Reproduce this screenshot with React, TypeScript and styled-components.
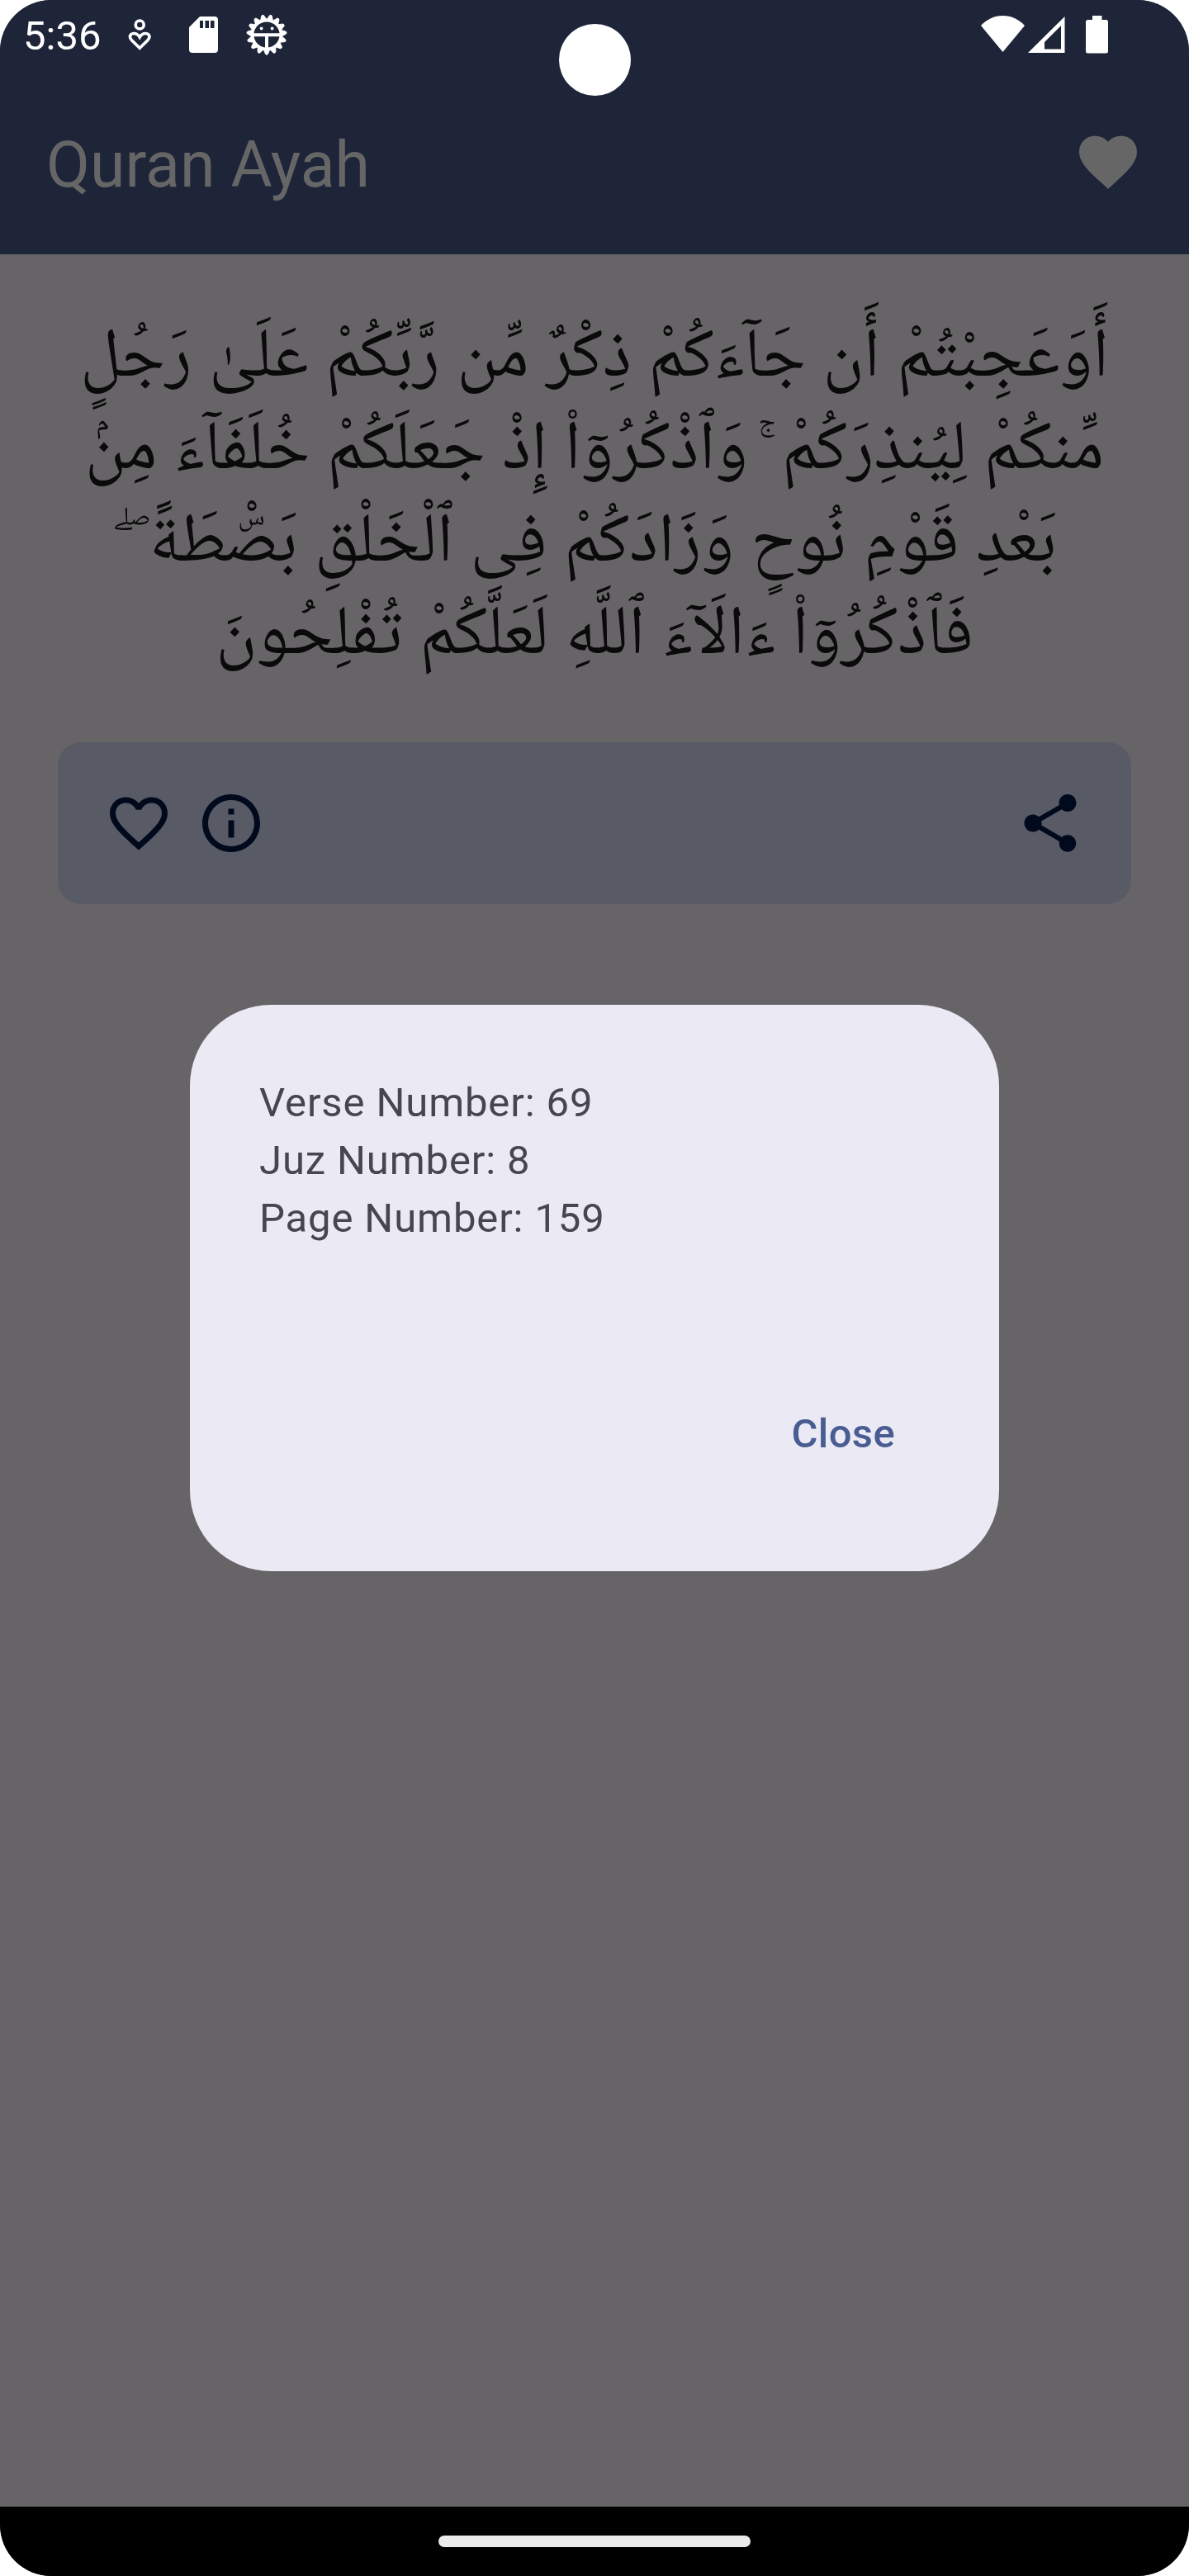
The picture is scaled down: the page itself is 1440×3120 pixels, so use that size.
import React from "react";
import styled, { createGlobalStyle } from "styled-components";

const GlobalStyle = createGlobalStyle`
  html, body { margin: 0; padding: 0; background: #ffffff; }
  *, *::before, *::after { box-sizing: border-box; }
`;

const Phone = styled.div`
  position: relative;
  width: 1440px;
  height: 3120px;
  display: flex;
  flex-direction: column;
  border-radius: 62px;
  overflow: hidden;
  background: #676467;
  font-family: Roboto, "Liberation Sans", sans-serif;
`;

const StatusBar = styled.div`
  height: 84px;
  flex: none;
  display: flex;
  justify-content: space-between;
  padding: 0 98px 0 28px;
  background: #1e2539;
  color: #ffffff;
`;

const StatusGroup = styled.div`
  display: flex;
  align-items: flex-start;
`;

const Clock = styled.span`
  width: 96px;
  padding-top: 15px;
  font-size: 49px;
  line-height: 57px;
  white-space: nowrap;
`;

const StatusIcon = styled.svg<{ $w: number; $h: number; $left: number; $top: number }>`
  flex: none;
  display: block;
  width: ${(p) => p.$w}px;
  height: ${(p) => p.$h}px;
  margin: ${(p) => p.$top}px 0 0 ${(p) => p.$left}px;
`;

const Camera = styled.div`
  position: absolute;
  left: 677px;
  top: 29px;
  width: 87px;
  height: 87px;
  border-radius: 50%;
  background: #ffffff;
`;

const AppBar = styled.header`
  height: 224px;
  flex: none;
  display: flex;
  align-items: center;
  justify-content: space-between;
  padding: 0 56px;
  background: #1e2539;
  color: #666666;
`;

const Title = styled.h1`
  margin: 0 0 -8px;
  font-size: 77px;
  line-height: 98px;
  font-weight: 400;
`;

const Icon = styled.svg`
  display: block;
  width: 84px;
  height: 84px;
  fill: currentColor;
`;

const Content = styled.main`
  flex: 1;
  padding: 73px 70px 0;
`;

const Verse = styled.p`
  height: 448px;
  margin: 0;
  direction: rtl;
  color: #0a0a0a;
  font-family: "Noto Naskh Arabic", "DejaVu Sans", "Noto Sans", sans-serif;
  font-size: 84px;
  line-height: 112px;
  text-align: center;
  word-spacing: 2px;
  white-space: nowrap;
`;

const VerseLine = styled.span`
  display: block;
  height: 112px;
`;

const PauseMark = styled.span<{ $shift: number }>`
  margin-right: ${(p) => p.$shift}px;
  margin-left: ${(p) => -p.$shift}px;
`;

const ActionBar = styled.div`
  display: flex;
  align-items: center;
  height: 196px;
  margin-top: 70px;
  padding: 0 56px;
  gap: 28px;
  border-radius: 28px;
  background: #585a66;
  color: #000a1c;
`;

const Spacer = styled.div`
  flex: 1;
`;

const NavBar = styled.div`
  height: 84px;
  flex: none;
  display: flex;
  align-items: center;
  justify-content: center;
  background: #000000;
`;

const Handle = styled.div`
  width: 378px;
  height: 14px;
  border-radius: 7px;
  background: #ebebeb;
`;

const Overlay = styled.div`
  position: absolute;
  inset: 0;
  display: flex;
  align-items: center;
  justify-content: center;
`;

const Dialog = styled.section`
  display: flex;
  flex-direction: column;
  width: 980px;
  height: 686px;
  padding: 84px;
  border-radius: 98px;
  background: #ebe9f3;
  color: #45464f;
`;

const DialogLine = styled.p`
  margin: 0;
  font-size: 49px;
  line-height: 70px;
  letter-spacing: 0.875px;
`;

const DialogActions = styled.div`
  display: flex;
  justify-content: flex-end;
  margin-top: 156px;
`;

const CloseButton = styled.button`
  height: 140px;
  padding: 0 42px;
  border: 0;
  background: none;
  color: #495d92;
  font: 500 49px/70px Roboto, "Liberation Sans", sans-serif;
  letter-spacing: 0.35px;
`;

const verse = [
  { text: "أَوَعَجِبْتُمْ أَن جَآءَكُمْ ذِكْرٌ مِّن رَّبِّكُمْ عَلَىٰ رَجُلٍ" },
  { text: "مِّنكُمْ لِيُنذِرَكُمْ", mark: " ۚ", shift: 6, rest: " وَٱذْكُرُوٓا۟ إِذْ جَعَلَكُمْ خُلَفَآءَ مِنۢ" },
  { text: "بَعْدِ قَوْمِ نُوحٍ وَزَادَكُمْ فِى ٱلْخَلْقِ بَصْۜطَةً", mark: " ۖ", shift: 10 },
  { text: "فَٱذْكُرُوٓا۟ ءَالَآءَ ٱللَّهِ لَعَلَّكُمْ تُفْلِحُونَ" },
];

const details = ["Verse Number: 69", "Juz Number: 8", "Page Number: 159"];

const teeth = Array.from({ length: 15 }, (_, i) => i * 24 + 12);

export default function App() {
  return (
    <>
      <GlobalStyle />
      <Phone>
        <StatusBar>
          <StatusGroup>
            <Clock>5:36</Clock>
            <StatusIcon $w={28} $h={40} $left={31} $top={23} viewBox="0 0 28 40" fill="none" stroke="#fff" strokeWidth="3.6">
              <circle cx="14.2" cy="7" r="5" />
              <path d="M14.2 35.3 4.3 25.4C.8 21.6 2.6 17.5 7.5 17.5c3 0 5.2 2 6.7 4.6 1.5-2.6 3.7-4.6 6.7-4.6 4.900 0 6.700 4.100 3.200 7.900z" />
            </StatusIcon>
            <StatusIcon $w={35} $h={44} $left={46} $top={20} viewBox="0 0 35 44">
              <path fill="#fff" fillRule="evenodd" d="M13 0H31a4 4 0 0 1 4 4v36a4 4 0 0 1-4 4H4a4 4 0 0 1-4-4V13zM13 5v9h4V5zM19.5 5v9h4.500V5zM26 5v9h4.500V5z" />
            </StatusIcon>
            <StatusIcon $w={50} $h={50} $left={34} $top={17} viewBox="0 0 50 50">
              {teeth.map((a) => (
                <path key={a} transform={`rotate(${a} 25 25)`} d="M21 7.500 23.300 2a1.800 1.800 0 0 1 3.400 0L29 7.500z" fill="#fff" stroke="#fff" strokeWidth="0.8" />
              ))}
              <circle cx="25" cy="25" r="17.4" fill="none" stroke="#fff" strokeWidth="3.6" />
              <path d="M9 25.200H41M25 25V42" stroke="#fff" strokeWidth="4" fill="none" />
              <circle cx="18.6" cy="17.5" r="1.9" fill="#fff" />
              <circle cx="31.6" cy="17.5" r="1.9" fill="#fff" />
            </StatusIcon>
          </StatusGroup>
          <StatusGroup>
            <StatusIcon $w={53} $h={44} $left={0} $top={19} viewBox="0 0 53 44" fill="#fff">
              <path d="M26.5 44 0 12C7 4.500 16 0 26.500 0S46 4.500 53 12z" />
            </StatusIcon>
            <StatusIcon $w={45} $h={44} $left={4} $top={19.5} viewBox="0 0 45 44">
              <path fill="#fff" fillRule="evenodd" d="M0 44 44.500 0V44zM20 31v8.500H40V11z" />
            </StatusIcon>
            <StatusIcon $w={27} $h={46} $left={25} $top={19} viewBox="0 0 27 46" fill="#fff">
              <path d="M8 0H19.500V5H24.500A2.500 2.500 0 0 1 27 7.500V43a2.500 2.500 0 0 1-2.500 2.500H2.500A2.500 2.500 0 0 1 0 43V7.500A2.500 2.500 0 0 1 2.500 5H8z" />
            </StatusIcon>
          </StatusGroup>
        </StatusBar>
        <AppBar>
          <Title>Quran Ayah</Title>
          <Icon viewBox="0 0 24 24">
            <path d="M12 21.35l-1.45-1.32C5.4 15.36 2 12.28 2 8.5 2 5.42 4.42 3 7.5 3c1.74 0 3.41.81 4.5 2.09C13.09 3.81 14.76 3 16.5 3 19.58 3 22 5.42 22 8.5c0 3.78-3.4 6.86-8.55 11.54L12 21.35z" />
          </Icon>
        </AppBar>
        <Content>
          <Verse lang="ar">
            {verse.map((line) => (
              <VerseLine key={line.text}>
                {line.text}
                {line.mark && <PauseMark $shift={line.shift ?? 0}>{line.mark}</PauseMark>}
                {line.rest}
              </VerseLine>
            ))}
          </Verse>
          <ActionBar>
            <Icon viewBox="0 0 24 24">
              <path d="M16.5 3c-1.740 0-3.410.810-4.500 2.090C10.910 3.810 9.240 3 7.500 3 4.420 3 2 5.420 2 8.500c0 3.780 3.400 6.860 8.550 11.540L12 21.350l1.450-1.320C18.600 15.360 22 12.280 22 8.500 22 5.420 19.580 3 16.500 3zm-4.400 15.550l-.1.100-.1-.1C7.140 14.240 4 11.390 4 8.500 4 6.500 5.500 5 7.500 5c1.540 0 3.040.990 3.570 2.360h1.870C13.460 5.990 14.960 5 16.500 5c2 0 3.500 1.500 3.500 3.500 0 2.890-3.140 5.740-7.900 10.050z" />
            </Icon>
            <Icon viewBox="0 0 24 24">
              <path d="M11 7h2v2h-2zm0 4h2v6h-2zm1-9C6.480 2 2 6.480 2 12s4.480 10 10 10 10-4.480 10-10S17.520 2 12 2zm0 18c-4.410 0-8-3.590-8-8s3.590-8 8-8 8 3.590 8 8-3.590 8-8 8z" />
            </Icon>
            <Spacer />
            <Icon viewBox="0 0 24 24">
              <path d="M18 16.080c-.76 0-1.440.3-1.960.77L8.910 12.700c.05-.23.09-.46.09-.7s-.04-.47-.09-.7l7.050-4.110c.54.5 1.250.81 2.040.81 1.660 0 3-1.340 3-3s-1.340-3-3-3-3 1.340-3 3c0 .24.04.47.09.7L8.040 9.810C7.500 9.310 6.790 9 6 9c-1.660 0-3 1.340-3 3s1.340 3 3 3c.79 0 1.500-.31 2.040-.81l7.120 4.160c-.05.21-.08.43-.08.65 0 1.610 1.310 2.920 2.920 2.920 1.610 0 2.920-1.310 2.920-2.920s-1.310-2.920-2.920-2.920z" />
            </Icon>
          </ActionBar>
        </Content>
        <NavBar>
          <Handle />
        </NavBar>
        <Camera />
        <Overlay>
          <Dialog role="dialog">
            {details.map((d) => (
              <DialogLine key={d}>{d}</DialogLine>
            ))}
            <DialogActions>
              <CloseButton>Close</CloseButton>
            </DialogActions>
          </Dialog>
        </Overlay>
      </Phone>
    </>
  );
}
